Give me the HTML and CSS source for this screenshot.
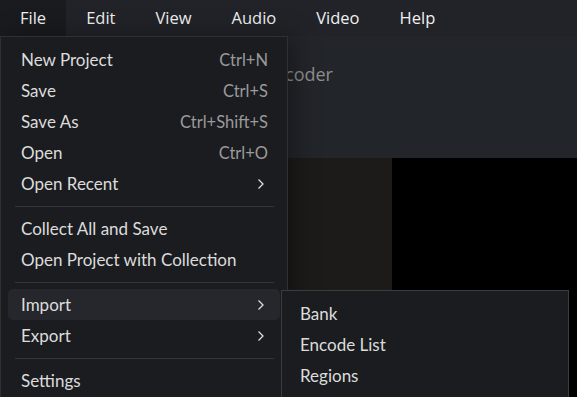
FILE: index.html
```html
<!DOCTYPE html>
<html lang="en">
<head>
    <meta charset="UTF-8">
    <meta name="viewport" content="width=device-width, initial-scale=1.0">
    <title>Encoder</title>
    <link rel="stylesheet" href="styles.css">
</head>
<body>

    <div class="menubar">
        <div class="menubar-item active">File</div>
        <div class="menubar-item">Edit</div>
        <div class="menubar-item">View</div>
        <div class="menubar-item">Audio</div>
        <div class="menubar-item">Video</div>
        <div class="menubar-item">Help</div>
    </div>

    <div class="header">
        <span class="title">Encoder</span>
    </div>

    <div class="workspace">
        <div class="panel-left"></div>
        <div class="panel-right"></div>
    </div>

    <!-- File dropdown -->
    <div class="dropdown">
        <div class="menu-item"><span>New Project</span><span class="shortcut">Ctrl+N</span></div>
        <div class="menu-item"><span>Save</span><span class="shortcut">Ctrl+S</span></div>
        <div class="menu-item"><span>Save As</span><span class="shortcut">Ctrl+Shift+S</span></div>
        <div class="menu-item"><span>Open</span><span class="shortcut">Ctrl+O</span></div>
        <div class="menu-item"><span>Open Recent</span><svg class="chevron" width="8" height="12" viewBox="0 0 8 12"><polyline points="1.5,1.5 6,6 1.5,10.5" /></svg></div>
        <div class="separator"></div>
        <div class="menu-item"><span>Collect All and Save</span></div>
        <div class="menu-item"><span>Open Project with Collection</span></div>
        <div class="separator"></div>
        <div class="menu-item hover"><span>Import</span><svg class="chevron" width="8" height="12" viewBox="0 0 8 12"><polyline points="1.5,1.5 6,6 1.5,10.5" /></svg></div>
        <div class="menu-item"><span>Export</span><svg class="chevron" width="8" height="12" viewBox="0 0 8 12"><polyline points="1.5,1.5 6,6 1.5,10.5" /></svg></div>
        <div class="separator"></div>
        <div class="menu-item"><span>Settings</span></div>
    </div>

    <!-- Import submenu -->
    <div class="submenu">
        <div class="menu-item"><span>Bank</span></div>
        <div class="menu-item"><span>Encode List</span></div>
        <div class="menu-item"><span>Regions</span></div>
    </div>

</body>
</html>
```

FILE: styles.css
```css
html, body {
    margin: 0;
    height: 100%;
    overflow: hidden;
}
body {
    background-color: #22252a;
    font-family: Lato, "Open Sans", sans-serif;
    color: #dcdcdc;
    display: flex;
    flex-direction: column;
}
.menubar {
    display: flex;
    height: 36px;
    background-color: #212328;
    font-family: "Open Sans", sans-serif;
    font-size: 16.5px;
    color: #f0f0f0;
}
.menubar-item {
    padding: 0 20px;
    line-height: 36px;
}
.menubar-item.active {
    background-color: #1a1b1f;
}
.header {
    height: 122px;
    background-color: #22252a;
    padding-left: 264px;
    box-sizing: border-box;
    padding-top: 26px;
}
.title {
    font-family: "Open Sans", sans-serif;
    font-size: 18px;
    color: #8e8e8e;
}
.workspace {
    flex: 1;
    display: flex;
}
.panel-left {
    width: 392px;
    background-color: #1c1b1a;
}
.panel-right {
    flex: 1;
    background-color: #000;
}
.dropdown {
    position: absolute;
    top: 36px;
    left: 0;
    width: 286px;
    height: 353px;
    background-color: #1b1c20;
    border: 1px solid #2e3035;
    border-bottom: none;
    padding-top: 7px;
    box-shadow: 6px 0 24px rgba(0, 0, 0, 0.35);
}
.menu-item {
    display: flex;
    justify-content: space-between;
    align-items: center;
    height: 31px;
    margin: 0 7px;
    padding: 0 12px 0 13px;
    border-radius: 5px;
    font-size: 17px;
}
.menu-item.hover {
    background-color: #25272c;
}
.shortcut {
    color: #9a9a9a;
    font-size: 16.5px;
}
.chevron {
    margin-right: 3px;
}
.chevron polyline {
    fill: none;
    stroke: #dcdcdc;
    stroke-width: 1.3;
}
.separator {
    height: 1px;
    margin: 7px 13px 6px 14px;
    background-color: #33353a;
}
.submenu {
    position: absolute;
    top: 290px;
    left: 281px;
    width: 286px;
    height: 99px;
    background-color: #1b1c20;
    border: 1px solid #3a3c41;
    border-bottom: none;
    padding-top: 7px;
}
.submenu .menu-item {
    margin: 0;
    padding-left: 18px;
}
```
